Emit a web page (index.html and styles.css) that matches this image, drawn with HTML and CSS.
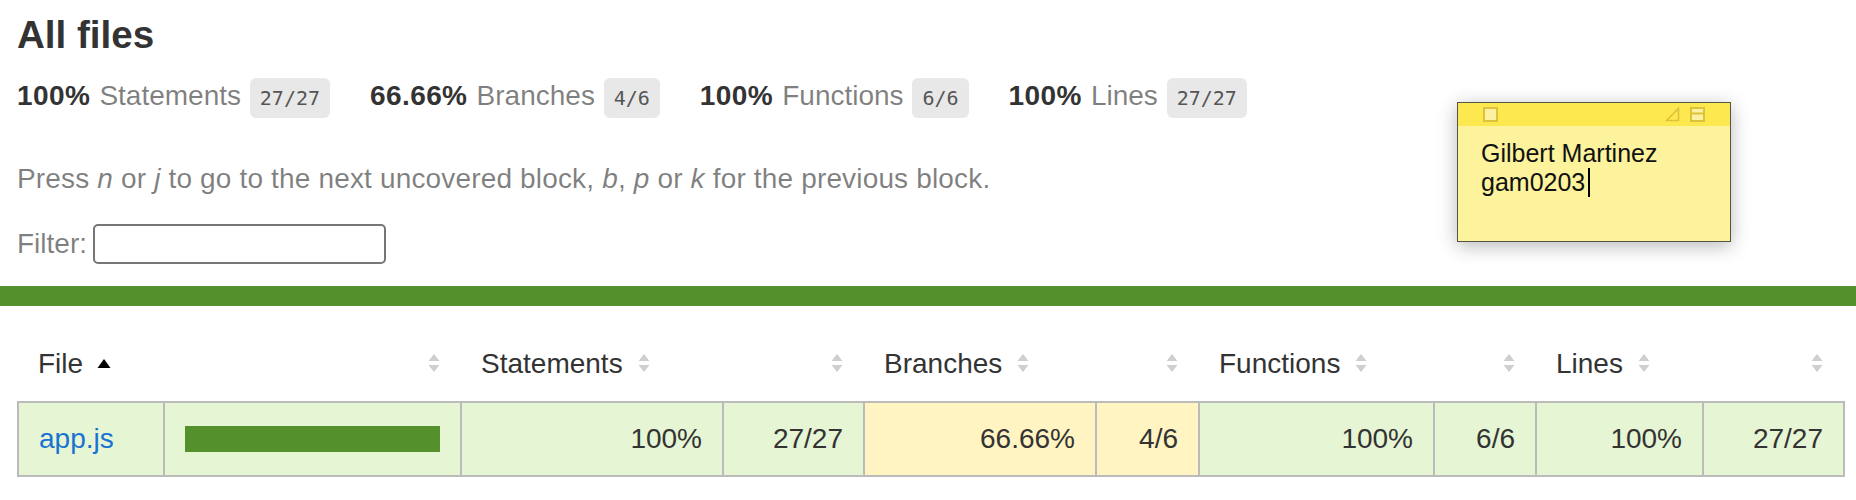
FILE: index.html
```html
<!DOCTYPE html>
<html lang="en">
<head>
<meta charset="utf-8">
<title>Code coverage report for All files</title>
<link rel="stylesheet" href="styles.css">
</head>
<body>
<div class="wrapper">
  <div class="top">
    <h1>All files</h1>
    <div class="summary">
      <div class="stat"><span class="strong">100% </span> <span class="quiet">Statements</span> <span class="fraction">27/27</span></div>
      <div class="stat"><span class="strong">66.66% </span> <span class="quiet">Branches</span> <span class="fraction">4/6</span></div>
      <div class="stat"><span class="strong">100% </span> <span class="quiet">Functions</span> <span class="fraction">6/6</span></div>
      <div class="stat"><span class="strong">100% </span> <span class="quiet">Lines</span> <span class="fraction">27/27</span></div>
    </div>
    <p class="quiet hint">Press <em>n</em> or <em>j</em> to go to the next uncovered block, <em>b</em>, <em>p</em> or <em>k</em> for the previous block.</p>
    <div class="quiet filter">Filter: <input type="search" class="search" aria-label="Filter"></div>
  </div>
  <div class="status-line"></div>
  <div class="table-wrap">
    <table class="coverage-summary">
      <colgroup>
        <col class="w-file"><col class="w-pic"><col class="w-spct"><col class="w-sabs"><col class="w-bpct"><col class="w-babs"><col class="w-fpct"><col class="w-fabs"><col class="w-lpct"><col class="w-labs">
      </colgroup>
      <thead>
        <tr>
          <th class="file">File<svg class="sorter" width="14" height="20" viewBox="0 0 14 20"><path d="M0.5 15 L7 6 L13.5 15 Z" fill="#000"/></svg></th>
          <th class="pic"><svg class="sorter" width="14" height="20" viewBox="0 0 14 20"><path d="M7 1 L12.5 8 H1.5 Z M7 19 L12.5 12 H1.5 Z" fill="#cfcfcf"/></svg></th>
          <th class="pct">Statements<svg class="sorter" width="14" height="20" viewBox="0 0 14 20"><path d="M7 1 L12.5 8 H1.5 Z M7 19 L12.5 12 H1.5 Z" fill="#cfcfcf"/></svg></th>
          <th class="abs"><svg class="sorter" width="14" height="20" viewBox="0 0 14 20"><path d="M7 1 L12.5 8 H1.5 Z M7 19 L12.5 12 H1.5 Z" fill="#cfcfcf"/></svg></th>
          <th class="pct">Branches<svg class="sorter" width="14" height="20" viewBox="0 0 14 20"><path d="M7 1 L12.5 8 H1.5 Z M7 19 L12.5 12 H1.5 Z" fill="#cfcfcf"/></svg></th>
          <th class="abs"><svg class="sorter" width="14" height="20" viewBox="0 0 14 20"><path d="M7 1 L12.5 8 H1.5 Z M7 19 L12.5 12 H1.5 Z" fill="#cfcfcf"/></svg></th>
          <th class="pct">Functions<svg class="sorter" width="14" height="20" viewBox="0 0 14 20"><path d="M7 1 L12.5 8 H1.5 Z M7 19 L12.5 12 H1.5 Z" fill="#cfcfcf"/></svg></th>
          <th class="abs"><svg class="sorter" width="14" height="20" viewBox="0 0 14 20"><path d="M7 1 L12.5 8 H1.5 Z M7 19 L12.5 12 H1.5 Z" fill="#cfcfcf"/></svg></th>
          <th class="pct">Lines<svg class="sorter" width="14" height="20" viewBox="0 0 14 20"><path d="M7 1 L12.5 8 H1.5 Z M7 19 L12.5 12 H1.5 Z" fill="#cfcfcf"/></svg></th>
          <th class="abs"><svg class="sorter" width="14" height="20" viewBox="0 0 14 20"><path d="M7 1 L12.5 8 H1.5 Z M7 19 L12.5 12 H1.5 Z" fill="#cfcfcf"/></svg></th>
        </tr>
      </thead>
      <tbody>
        <tr>
          <td class="file high"><a href="#">app.js</a></td>
          <td class="pic high"><div class="chart"><div class="cover-fill" style="width: 100%"></div></div></td>
          <td class="pct high">100%</td>
          <td class="abs high">27/27</td>
          <td class="pct medium">66.66%</td>
          <td class="abs medium">4/6</td>
          <td class="pct high">100%</td>
          <td class="abs high">6/6</td>
          <td class="pct high">100%</td>
          <td class="abs high">27/27</td>
        </tr>
      </tbody>
    </table>
  </div>
</div>

<div class="sticky">
  <div class="sticky-bar">
    <svg width="15" height="15" viewBox="0 0 15 15"><rect x="1" y="1" width="13" height="13" fill="#fbf1a0" stroke="#dcc33a" stroke-width="2"/></svg>
    <div class="sticky-right">
      <svg width="15" height="15" viewBox="0 0 15 15"><path d="M1.5 13.5 L13.5 1.5 V13.5 Z" fill="none" stroke="#dcc33a" stroke-width="1.6" stroke-linejoin="miter"/></svg>
      <svg width="15" height="15" viewBox="0 0 15 15"><rect x="1" y="1" width="13" height="13" fill="#fbf1a0" stroke="#dcc33a" stroke-width="2"/><line x1="1" y1="6.5" x2="14" y2="6.5" stroke="#dcc33a" stroke-width="2"/></svg>
    </div>
  </div>
  <div class="sticky-body">Gilbert Martinez<br>gam0203<span class="caret"></span></div>
</div>
</body>
</html>
```

FILE: styles.css
```css
* { box-sizing: border-box; }
html, body { margin: 0; padding: 0; }
body {
  font-family: "Liberation Sans", Arial, Helvetica, sans-serif;
  font-size: 28px;
  color: #333;
  background: #fff;
  width: 1856px;
  height: 500px;
  overflow: hidden;
  position: relative;
}
.top { padding: 12px 13px 22px 17px; }
h1 { font-size: 38.6px; line-height: 46px; margin: 0; font-weight: bold; }
.summary { display: flex; }
.stat { padding: 22px 0 20px; margin-right: 40px; line-height: 32px; white-space: nowrap; word-spacing: 1px; }
.strong { font-weight: bold; letter-spacing: 0.4px; }
.quiet { color: rgba(0, 0, 0, 0.5); }
.fraction {
  font-family: "DejaVu Sans Mono", "Liberation Mono", monospace;
  font-size: 20px;
  line-height: normal;
  word-spacing: 0;
  color: #555;
  background: #e8e8e8;
  padding: 8px 10px;
  border-radius: 6px;
  vertical-align: middle;
}
.hint { margin: 31px 0 0; line-height: 32px; letter-spacing: 0.16px; }
.filter { margin-top: 29px; display: flex; align-items: center; gap: 6px; height: 40px; }
.search {
  width: 293px; height: 40px; margin: 0; padding: 0 6px;
  border: 2px solid #767676; border-radius: 5px; background: #fff;
  font: inherit; -webkit-appearance: none; appearance: none;
}
.status-line { height: 20px; background: #54912c; }
.table-wrap { padding: 20px 13px 20px 17px; }
.coverage-summary { border-collapse: collapse; table-layout: fixed; width: 1826px; }
.w-file { width: 146px; } .w-pic { width: 297px; } .w-spct { width: 262px; } .w-sabs { width: 141px; }
.w-bpct { width: 232px; } .w-babs { width: 103px; } .w-fpct { width: 235px; } .w-fabs { width: 102px; }
.w-lpct { width: 167px; } .w-labs { width: 141px; }
.coverage-summary tr { border-bottom: 2px solid #bbb; }
.coverage-summary tbody { border: 2px solid #bbb; }
.coverage-summary th, .coverage-summary td { padding: 0 20px; line-height: 32px; vertical-align: middle; }
.coverage-summary th { height: 76px; text-align: left; font-weight: normal; white-space: nowrap; }
.coverage-summary td { height: 74px; border-right: 2px solid #bbb; white-space: nowrap; }
.coverage-summary th.pic, .coverage-summary th.abs, .coverage-summary td.pct, .coverage-summary td.abs { text-align: right; }
.sorter { display: inline-block; margin-left: 14px; vertical-align: baseline; }
.coverage-summary a { color: #1a73d3; text-decoration: none; }
.high { background: #e6f5d3; }
.medium { background: #fff4c2; }
.chart { border: 2px solid #54912c; line-height: 0; }
.cover-fill { display: inline-block; height: 22px; background: #54912c; }

.sticky {
  position: absolute; left: 1457px; top: 102px; width: 274px; height: 140px;
  background: #fcf39c; border: 1px solid #55554a;
  box-shadow: 0 4px 18px rgba(0, 0, 0, 0.28);
  font-family: "Liberation Sans", Arial, sans-serif;
}
.sticky-bar {
  height: 23px; background: #fde84f;
  display: flex; align-items: center; justify-content: space-between;
  padding: 0 25px;
}
.sticky-bar svg { display: block; }
.sticky-right { display: flex; gap: 10px; }
.sticky-body { padding: 13px 0 0 23px; font-size: 25px; line-height: 29px; color: #111; }
.caret { display: inline-block; width: 2px; height: 29px; background: #000; vertical-align: top; margin-left: 3px; }
```
